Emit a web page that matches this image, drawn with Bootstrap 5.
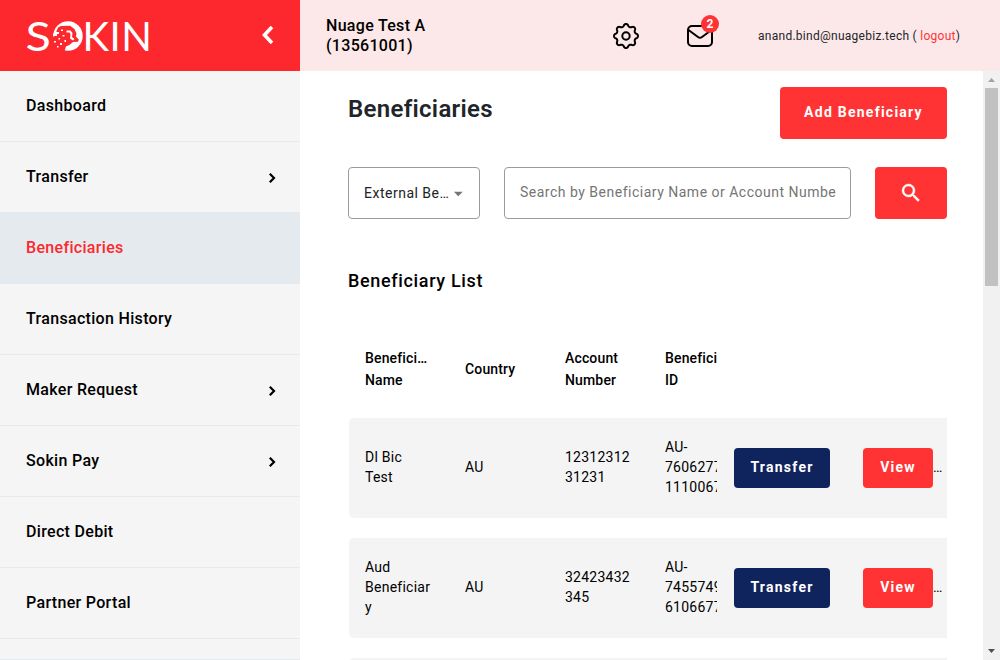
<!DOCTYPE html>
<html lang="en">
<head>
<meta charset="utf-8">
<meta name="viewport" content="width=device-width, initial-scale=1">
<title>Beneficiaries</title>
<link href="https://cdn.jsdelivr.net/npm/bootstrap@5.3.0/dist/css/bootstrap.min.css" rel="stylesheet">
<style>
body{font-family:Roboto,sans-serif;font-size:14px;letter-spacing:.5px;color:#000;background:#fff}
.sidebar{width:300px;background:#f5f5f5}
.brand-bar{height:71px;background:#fc282e;padding:0 26px 0 24px}
.side-link{height:71px;padding:0 23px 0 26px;border-bottom:1px solid #e5eaee;font-size:16px;font-weight:500;letter-spacing:.32px;color:#000;text-decoration:none}
.side-link.active{background:#e5eaee;color:#fc282e}
.side-link svg{margin-top:2px}
.side-rest{height:21px;border-bottom:1px solid #e5eaee}
.topbar{height:71px;background:#fde8e9}
.account{width:289px;padding-left:26px;font-size:16px;font-weight:500;line-height:20px;letter-spacing:.3px}
.mail{margin-left:47px}
.count{position:absolute;left:15px;top:-9px;width:18px;height:18px;line-height:18px;font-size:12px;font-weight:700;background:#f33;color:#fff;letter-spacing:0}
.user{margin-left:44px;font-size:12px;letter-spacing:.27px;color:#212529}
.user a{color:#f33;text-decoration:none}
.content{padding:16px 36px 0 48px}
.page-title{font-size:24px;font-weight:600;line-height:28px;letter-spacing:.3px;color:#212529;margin-top:8px}
.btn-main,.btn-navy{border:0;border-radius:4px;font-size:14px;font-weight:700;letter-spacing:1.25px;color:#fff;padding:0}
.btn-main{background:#f33}
.btn-navy{background:#0f235c}
.btn-add{width:167px;height:52px;padding-bottom:2px}
.field-box{height:52px;border:1px solid #9b9b9b;border-radius:4px;color:#222;padding:0 15px}
.picker{width:132px}
.picker svg{margin:2px 0 0 4px}
.search{width:347px;color:#757575;padding-bottom:2px}
.btn-find{width:72px;height:52px}
.list-title{font-size:18px;font-weight:500;line-height:24px;letter-spacing:.65px;margin:50px 0 0}
.grid-row{display:grid;grid-template-columns:100px 100px 100px 68px 130px 100px;align-items:center;margin-left:1px}
.grid-row>div{padding-left:16px;overflow:hidden;line-height:20px}
.grid-head{height:76px;margin-top:38px;margin-bottom:11px;font-weight:500;letter-spacing:.15px}
.grid-head>div{line-height:22px}
.grid-body{height:100px;background:#f4f4f4;border-radius:5px 0 0 5px;margin-bottom:20px;padding-bottom:2px;letter-spacing:.25px}
.grid-row>.act{padding-left:17px}
.grid-row>.tools{padding-top:2px}
.tools .btn{height:40px;padding-bottom:2px}
.btn-navy{width:96px}.btn-view{width:70px}
.rail{width:17px;background:#f1f1f1}
.thumb{width:13px;height:198px;background:#c1c1c1}
</style>
</head>
<body>
<div class="d-flex vh-100 overflow-hidden">
  <aside class="sidebar d-flex flex-column flex-shrink-0">
    <div class="brand-bar d-flex align-items-center justify-content-between flex-shrink-0">
      <svg width="130" height="58" viewBox="24 7 130 58" fill="#fff" font-family="Lato,sans-serif" font-size="41">
        <text x="25.500" y="50.500" textLength="26" lengthAdjust="spacingAndGlyphs">S</text>
        <circle cx="68" cy="36" r="14.700"/>
        <path fill="#fc282e" d="M58 27.500l3-1.500 9-.3 4.500 3.300 2 4.500-.6 3 3 3.300-1 2-5 .2-3.500 3-3.500 1.500-1.500 5.500-5-.5-5-4-2-5 0-5 3-2 1-4z"/>
        <path d="M53 33.500h3v-1.500h3v2h-2v2h-4zM61 29.500h2v1.500h-2zM66.500 30.500h4l2 2.500-.5 4 2.500 2-1.500 1.500-3-2 .5-4-1-2h-3zM58.500 38h1.500v1.500h-1.500zM62.500 35h2v1.500h-2zM54 41h2v1.500h-2zM60 43h2v2h-2zM64.500 40h1.500v2h-1.500zM57 46h1.500v1.500h-1.500z"/>
        <text x="82.500" y="50.500" textLength="70" lengthAdjust="spacingAndGlyphs">KIN</text>
      </svg>
      <svg class="mb-1" width="14" height="20" viewBox="0 0 14 20" fill="none" stroke="#fff" stroke-width="3.600"><path d="M12 3L4.500 11l7.500 8"/></svg>
    </div>
    <nav class="d-flex flex-column">
      <a class="side-link d-flex align-items-center" href="#">Dashboard</a>
      <a class="side-link d-flex align-items-center justify-content-between" href="#">Transfer<svg width="10" height="12" viewBox="0 0 10 12" fill="none" stroke="#000" stroke-width="2.200"><path d="M2.800 1.800l4.200 4.200-4.200 4.200"/></svg></a>
      <a class="side-link active d-flex align-items-center" href="#">Beneficiaries</a>
      <a class="side-link d-flex align-items-center" href="#">Transaction History</a>
      <a class="side-link d-flex align-items-center justify-content-between" href="#">Maker Request<svg width="10" height="12" viewBox="0 0 10 12" fill="none" stroke="#000" stroke-width="2.200"><path d="M2.800 1.800l4.200 4.200-4.200 4.200"/></svg></a>
      <a class="side-link d-flex align-items-center justify-content-between" href="#">Sokin Pay<svg width="10" height="12" viewBox="0 0 10 12" fill="none" stroke="#000" stroke-width="2.200"><path d="M2.800 1.800l4.200 4.200-4.200 4.200"/></svg></a>
      <a class="side-link d-flex align-items-center" href="#">Direct Debit</a>
      <a class="side-link d-flex align-items-center" href="#">Partner Portal</a>
      <div class="side-rest"></div>
    </nav>
  </aside>
  <div class="d-flex flex-column flex-fill">
    <header class="topbar d-flex align-items-center flex-shrink-0">
      <div class="account flex-shrink-0">Nuage Test A<br>(13561001)</div>
      <svg id="gear" class="ms-4" width="26" height="26" viewBox="-13 -13 26 26" fill="none" stroke="#000" stroke-width="2" stroke-linejoin="round"></svg>
      <div class="mail position-relative d-flex">
        <svg width="28" height="24" viewBox="0 0 28 24" fill="none" stroke="#000" stroke-width="2"><rect x="2" y="2" width="24" height="20" rx="4"/><path d="M2.500 6l9.500 7q2 1.500 4 0l9.500-7"/></svg>
        <span class="count rounded-circle text-center">2</span>
      </div>
      <div class="user text-nowrap">anand.bind@nuagebiz.tech ( <a href="#">logout</a>)</div>
    </header>
    <div class="d-flex flex-fill overflow-hidden">
      <main class="content flex-fill overflow-hidden">
        <div class="d-flex justify-content-between align-items-start">
          <h1 class="page-title mb-0">Beneficiaries</h1>
          <button class="btn btn-main btn-add">Add Beneficiary</button>
        </div>
        <div class="d-flex justify-content-between mt-4 pt-1">
          <div class="field-box picker d-flex align-items-center"><span class="text-nowrap">External Be…</span><svg width="12" height="6" viewBox="0 0 12 6"><path fill="#757575" d="M1 .5h10l-5 5z"/></svg></div>
          <div class="field-box search d-flex align-items-center text-nowrap overflow-hidden">Search by Beneficiary Name or Account Numbe</div>
          <button class="btn btn-main btn-find d-flex align-items-center justify-content-center"><svg width="24" height="24" viewBox="0 0 24 24" fill="#fff" stroke="#fff" stroke-width=".4"><path d="M15.500 14h-.79l-.28-.27A6.471 6.471 0 0 0 16 9.500 6.500 6.500 0 1 0 9.500 16c1.610 0 3.090-.59 4.230-1.570l.27.28v.79l5 4.990L20.490 19l-4.990-5zm-6 0C7.010 14 5 11.990 5 9.500S7.010 5 9.500 5 14 7.010 14 9.500 11.990 14 9.500 14z"/></svg></button>
        </div>
        <h2 class="list-title">Beneficiary List</h2>
        <div class="grid-row grid-head">
          <div>Benefici…<br>Name</div><div>Country</div><div>Account<br>Number</div><div>Benefici<br>ID</div>
        </div>
        <div class="grid-row grid-body">
          <div>Dl Bic<br>Test</div><div>AU</div><div>12312312<br>31231</div><div>AU-<br>7606277<br>1110067</div>
          <div class="act tools"><button class="btn btn-navy">Transfer</button></div>
          <div class="tools text-nowrap"><button class="btn btn-main btn-view">View</button>…</div>
        </div>
        <div class="grid-row grid-body">
          <div>Aud<br>Beneficiar<br>y</div><div>AU</div><div>32423432<br>345</div><div>AU-<br>7455749<br>6106677</div>
          <div class="act tools"><button class="btn btn-navy">Transfer</button></div>
          <div class="tools text-nowrap"><button class="btn btn-main btn-view">View</button>…</div>
        </div>
        <div class="grid-row grid-body"></div>
      </main>
      <div class="rail d-flex flex-column align-items-center flex-shrink-0">
        <svg width="17" height="17" viewBox="0 0 17 17"><path fill="#a3a3a3" d="M5 11l3.500-4 3.500 4z"/></svg>
        <div class="thumb"></div>
        <svg class="mt-auto" width="17" height="17" viewBox="0 0 17 17"><path fill="#505050" d="M5 6l3.500 4L12 6z"/></svg>
      </div>
    </div>
  </div>
</div>
<script src="https://cdn.jsdelivr.net/npm/bootstrap@5.3.0/dist/js/bootstrap.bundle.min.js"></script>
<script>
// Eight-lobed gear outline plus its hub
let d = '';
for (let i = 0; i <= 160; i++) {
  const a = i / 160 * 2 * Math.PI, w = Math.cos(8 * a);
  const r = 10.8 + 1.2 * Math.sign(w) * Math.pow(Math.abs(w), .7);
  d += (i ? 'L' : 'M') + (r * Math.cos(a)).toFixed(2) + ' ' + (r * Math.sin(a)).toFixed(2);
}
document.getElementById('gear').innerHTML = '<path d="' + d + 'Z"/><circle r="3.700"/>';
</script>
</body>
</html>
